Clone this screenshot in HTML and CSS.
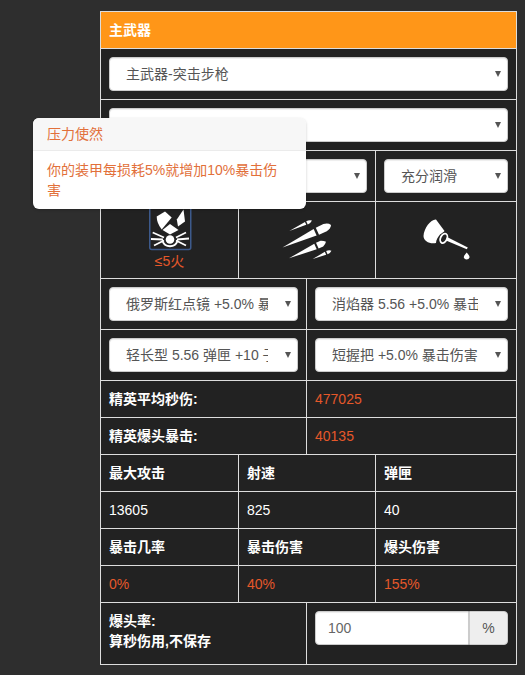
FILE: index.html
```html
<!DOCTYPE html>
<html>
	<head>
		<meta charset="utf-8" />
		<meta name="viewport" content="width=device-width, initial-scale=1.0" />
		<title>主武器</title>
		<link rel="stylesheet" href="styles.css">
	</head>
	<body>
		<table class="gear-table">
			<colgroup>
				<col class="col-a" />
				<col class="col-b" />
				<col class="col-c" />
				<col class="col-d" />
			</colgroup>
			<tr class="row-text">
				<th colspan="4" class="title">主武器</th>
			</tr>
			<tr class="row-select">
				<td colspan="4">
					<div class="select-wrap"><select class="control"><option>主武器-突击步枪</option></select></div>
				</td>
			</tr>
			<tr class="row-select">
				<td colspan="4">
					<div class="select-wrap"><select class="control"><option>突击步枪</option></select></div>
				</td>
			</tr>
			<tr class="row-select">
				<td>
					<div class="select-wrap"><select class="control"><option>压力使然</option></select></div>
				</td>
				<td colspan="2">
					<div class="select-wrap"><select class="control"><option>连射</option></select></div>
				</td>
				<td>
					<div class="select-wrap"><select class="control"><option>充分润滑</option></select></div>
				</td>
			</tr>
			<tr class="row-icons">
				<td class="icon-first">
					<svg class="talent-icon" width="44" height="46" viewBox="0 0 44 46">
						<rect x="1.750" y="1" width="41" height="43.500" rx="2" fill="none" stroke="#3d5a8c" stroke-width="1.500" />
						<path d="M8.700 11.500 L17 6.500 L23.700 12.500 L13.700 24.500 Q8.700 18 8.700 11.500 Z" fill="#fff" />
						<path d="M28.800 14.500 L35.500 4.500 L37 16.500 L30 21.500 Z" fill="#fff" />
						<path d="M14.500 25 L22 19 L30.500 25 L22 29.500 Z" fill="#fff" />
						<g stroke="#fff" stroke-width="1.800" fill="none">
							<path d="M4.700 27.500 L16 32.500 M6 40.500 L16 35.500 M3 34 L15 34.500" />
							<path d="M38 27.500 L28 32.500 M38 40.500 L28 35.500 M41 33.500 L29 34.500" />
						</g>
						<circle cx="22" cy="34.500" r="4.300" fill="#fff" />
						<path d="M14.500 36 A8 8 0 0 0 29.500 36" stroke="#fff" stroke-width="2" fill="none" />
					</svg>
					<div class="talent-label">≤5火</div>
				</td>
				<td colspan="2">
					<svg class="gear-icon" width="50" height="44" viewBox="0 0 50 44">
						<g fill="#fff">
							<g transform="translate(0.500 29.500) rotate(-25)">
								<path d="M0 0 L36 -3.500 L36 3.500 Z" />
								<path d="M38.500 -3.800 L47 -4 Q52 -3 53.500 0 Q52 3 47 4 L38.500 3.800 Z" />
							</g>
							<g transform="translate(7 40.300) rotate(-24)">
								<path d="M0 0 L29 -3 L29 3 Z" />
								<path d="M31 -3.200 L36 -3.200 Q39 -2 40.500 0 Q39 2 36 3.200 L31 3.200 Z" />
							</g>
							<g transform="translate(7.300 13) rotate(-25)">
								<path d="M0 0 L18 -1.600 L18 1.600 Z" />
								<path d="M19.500 -1.800 Q23 -1.800 25 0 Q23 1.800 19.500 1.800 Z" />
							</g>
							<g transform="translate(30.700 41) rotate(-24)">
								<path d="M0 0 L14 -1.600 L14 1.600 Z" />
								<path d="M15.500 -1.800 Q18.500 -1.800 20.500 0 Q18.500 1.800 15.500 1.800 Z" />
							</g>
						</g>
					</svg>
				</td>
				<td>
					<svg class="gear-icon" width="50" height="44" viewBox="0 0 50 44">
						<path d="M15 1.500 C10 1 3 10 2.500 18 C2.500 23 9 26.500 15 25 C15 22 17 19 19 16.500 C21 15 23 14 23.500 13 Z" fill="#fff" />
						<ellipse cx="22.800" cy="20.300" rx="3.200" ry="5" transform="rotate(25 22.800 20.300)" fill="none" stroke="#fff" stroke-width="1.800" />
						<path d="M26 19 L46.800 29.500 L45.800 31.200 L25 22.500 Z" fill="#fff" />
						<path d="M45.700 34.500 Q49 38 48.500 39.500 A3 3 0 0 1 42.800 39.500 Q42.500 38 45.700 34.500 Z" fill="#fff" />
					</svg>
				</td>
			</tr>
			<tr class="row-select">
				<td colspan="2" class="half-left">
					<div class="select-wrap"><select class="control"><option>俄罗斯红点镜 +5.0% 暴击伤害</option></select></div>
				</td>
				<td colspan="2">
					<div class="select-wrap"><select class="control"><option>消焰器 5.56 +5.0% 暴击伤害</option></select></div>
				</td>
			</tr>
			<tr class="row-select">
				<td colspan="2" class="half-left">
					<div class="select-wrap"><select class="control"><option>轻长型 5.56 弹匣 +10 子弹</option></select></div>
				</td>
				<td colspan="2">
					<div class="select-wrap"><select class="control"><option>短握把 +5.0% 暴击伤害</option></select></div>
				</td>
			</tr>
			<tr class="row-text">
				<th colspan="2">精英平均秒伤:</th>
				<td colspan="2" class="hot">477025</td>
			</tr>
			<tr class="row-text">
				<th colspan="2">精英爆头暴击:</th>
				<td colspan="2" class="hot">40135</td>
			</tr>
			<tr class="row-text">
				<th>最大攻击</th>
				<th colspan="2">射速</th>
				<th>弹匣</th>
			</tr>
			<tr class="row-text">
				<td>13605</td>
				<td colspan="2">825</td>
				<td>40</td>
			</tr>
			<tr class="row-text">
				<th>暴击几率</th>
				<th colspan="2">暴击伤害</th>
				<th>爆头伤害</th>
			</tr>
			<tr class="row-text">
				<td class="hot">0%</td>
				<td colspan="2" class="hot">40%</td>
				<td class="hot">155%</td>
			</tr>
			<tr class="row-last">
				<th colspan="2">爆头率:<br />算秒伤用,不保存</th>
				<td colspan="2">
					<div class="input-group">
						<input class="control group-input" type="text" value="100" />
						<span class="group-addon">%</span>
					</div>
				</td>
			</tr>
		</table>

		<!-- Talent tooltip -->
		<div class="popover">
			<div class="popover-title">压力使然</div>
			<div class="popover-body">你的装甲每损耗5%就增加10%暴击伤害</div>
		</div>
	</body>
</html>
```

FILE: styles.css
```css
body {
	font-family: "Liberation Sans", "Noto Sans CJK SC", sans-serif;
	font-size: 14px;
	line-height: 20px;
	margin: 0;
	padding: 11px 0 0 100px;
	background-color: #2e2e2e;
	color: #fff;
	position: relative;
}

/* Table */
.gear-table {
	width: 416px;
	table-layout: fixed;
	border-collapse: collapse;
	background: #222;
}

.col-a {
	width: 138px;
}

.col-b {
	width: 68px;
}

.col-c {
	width: 69px;
}

.col-d {
	width: 141px;
}

.gear-table td,
.gear-table th {
	border: 1px solid #ddd;
	padding: 8px;
	text-align: left;
	vertical-align: top;
}

.gear-table th {
	font-weight: bold;
}

.gear-table .title {
	background: #ff9618;
}

.row-text {
	height: 37px;
}

.row-select {
	height: 51px;
}

.row-icons {
	height: 77px;
}

.row-last {
	height: 62px;
}

.hot {
	color: #e5582a;
}

/* Form controls */
.control {
	display: block;
	width: 100%;
	height: 34px;
	box-sizing: border-box;
	padding: 6px 12px;
	border: 1px solid #ccc;
	border-radius: 4px;
	background: #fff;
	color: #555;
	font: inherit;
	box-shadow: inset 0 1px 1px rgba(0, 0, 0, 0.075);
}

.select-wrap {
	position: relative;
}

.select-wrap select {
	appearance: none;
	padding: 6px 29px 6px 16px;
}

.select-wrap::after {
	content: '';
	position: absolute;
	right: 7px;
	top: 14px;
	border-left: 3.500px solid transparent;
	border-right: 3.500px solid transparent;
	border-top: 6px solid #555;
}

.input-group {
	display: flex;
}

.group-input {
	flex: 1;
	min-width: 0;
	color: #666;
	border-radius: 4px 0 0 4px;
}

.group-addon {
	width: 39px;
	box-sizing: border-box;
	padding: 6px 0;
	text-align: center;
	color: #555;
	background: #eee;
	border: 1px solid #ccc;
	border-left: 1px solid #ccc;
	border-radius: 0 4px 4px 0;
}

/* Icons */
.row-icons td {
	text-align: center;
	vertical-align: middle;
}

.row-icons .icon-first {
	padding: 3px 8px 0;
	vertical-align: top;
}

.talent-icon,
.gear-icon {
	display: block;
	margin: 0 auto;
}

.talent-label {
	color: #e5582a;
}

/* Popover */
.popover {
	position: absolute;
	left: 33px;
	top: 118px;
	width: 273px;
	box-sizing: border-box;
	background: #fff;
	border-radius: 6px;
	color: #e2703a;
	box-shadow: 0 1px 3px rgba(0, 0, 0, 0.2);
}

.popover-title {
	padding: 6px 14px;
	background: #f7f7f7;
	border-bottom: 1px solid #ebebeb;
	border-radius: 6px 6px 0 0;
}

.popover-body {
	padding: 9px 16px 9px 14px;
}
```
